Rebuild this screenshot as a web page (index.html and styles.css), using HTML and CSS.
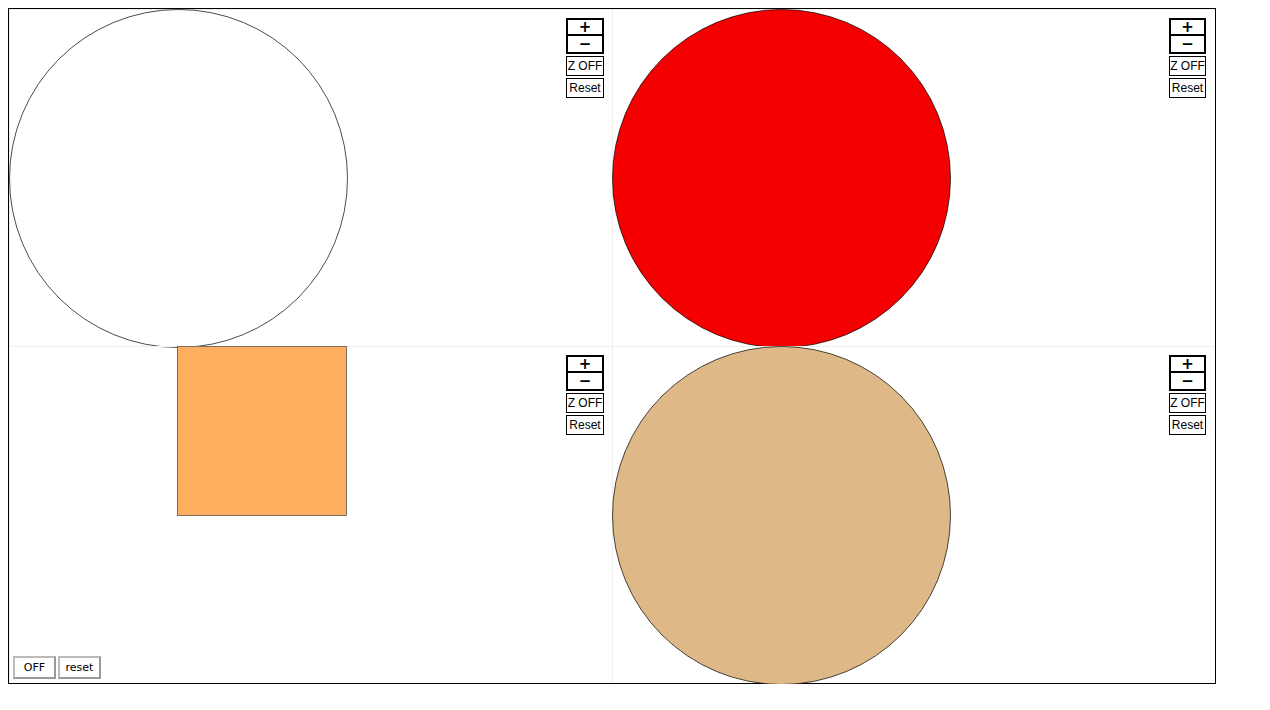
FILE: index.html
```html
<!DOCTYPE html>
<html lang="en">
<head>
  <meta charset="UTF-8">
  <title>Shapes</title>
  <link rel="stylesheet" href="styles.css">
</head>
<body>

<div class="board">
  <!-- cell 1: empty circle -->
  <div class="cell">
    <svg class="shape" width="603" height="337">
      <circle cx="169.5" cy="169.5" r="169" fill="#fff" stroke="#000" stroke-width="0.7"/>
    </svg>
    <div class="controls">
      <div class="zoom">
        <button class="zbtn">+</button>
        <button class="zbtn">&minus;</button>
      </div>
      <button class="ctl">Z OFF</button>
      <button class="ctl">Reset</button>
    </div>
  </div>

  <!-- cell 2: red circle -->
  <div class="cell">
    <svg class="shape" width="603" height="337">
      <circle cx="169.5" cy="169.5" r="169" fill="#f50000" stroke="#000" stroke-width="0.7"/>
    </svg>
    <div class="controls">
      <div class="zoom">
        <button class="zbtn">+</button>
        <button class="zbtn">&minus;</button>
      </div>
      <button class="ctl">Z OFF</button>
      <button class="ctl">Reset</button>
    </div>
  </div>

  <!-- cell 3: square -->
  <div class="cell">
    <svg class="shape" width="603" height="337">
      <rect x="168.5" y="0.5" width="169" height="169" fill="#ffae5f" stroke="#444" stroke-width="0.7"/>
    </svg>
    <div class="controls">
      <div class="zoom">
        <button class="zbtn">+</button>
        <button class="zbtn">&minus;</button>
      </div>
      <button class="ctl">Z OFF</button>
      <button class="ctl">Reset</button>
    </div>
    <div class="footer">
      <button class="small">OFF</button>
      <button class="small">reset</button>
    </div>
  </div>

  <!-- cell 4: tan circle -->
  <div class="cell">
    <svg class="shape" width="603" height="337">
      <circle cx="169.5" cy="169.5" r="169" fill="#deb887" stroke="#000" stroke-width="0.7"/>
    </svg>
    <div class="controls">
      <div class="zoom">
        <button class="zbtn">+</button>
        <button class="zbtn">&minus;</button>
      </div>
      <button class="ctl">Z OFF</button>
      <button class="ctl">Reset</button>
    </div>
  </div>
</div>

</body>
</html>
```

FILE: styles.css
```css
* {
  box-sizing: border-box;
}

body {
  margin: 8px;
  font-family: "Liberation Sans", Arial, sans-serif;
  background-color: #fff;
}

.board {
  width: 1208px;
  height: 676px;
  border: 1px solid #000;
  display: grid;
  grid-template-columns: 603px 603px;
  grid-template-rows: 337px 337px;
}

.cell {
  position: relative;
  box-shadow: inset 1px 1px 0 #eee;
}

.shape {
  position: absolute;
  left: 0;
  top: 0;
  overflow: visible;
}

.controls {
  position: absolute;
  top: 9px;
  right: 8px;
  display: flex;
  flex-direction: column;
  gap: 2px;
  width: 38px;
}

.cell:nth-child(2n) .controls {
  right: 9px;
  width: 37px;
}

.zoom {
  display: flex;
  flex-direction: column;
  border: 2px solid #000;
  background: #fff;
  height: 36px;
}

.zbtn {
  height: 16px;
  margin: 0;
  padding: 0;
  border: none;
  background: #fff;
  font-family: "DejaVu Sans", sans-serif;
  font-size: 15px;
  font-weight: bold;
  line-height: 14px;
  color: #000;
}

.zbtn:first-child {
  height: 16px;
  border-bottom: 2px solid #000;
}

.ctl {
  height: 20px;
  padding: 0;
  margin: 0;
  border: 1.5px solid #000;
  background: #fff;
  font-family: "Liberation Sans", Arial, sans-serif;
  font-size: 12px;
  color: #000;
  line-height: 1;
  white-space: nowrap;
}

.footer {
  position: absolute;
  left: 4px;
  bottom: 4px;
  display: flex;
  gap: 2px;
}

.small {
  width: 43px;
  height: 23px;
  padding: 0;
  margin: 0;
  border: 2px solid #bbb;
  border-right-color: #999;
  border-bottom-color: #999;
  background: #fff;
  font-family: "DejaVu Sans", sans-serif;
  font-size: 11px;
  color: #000;
}
```
